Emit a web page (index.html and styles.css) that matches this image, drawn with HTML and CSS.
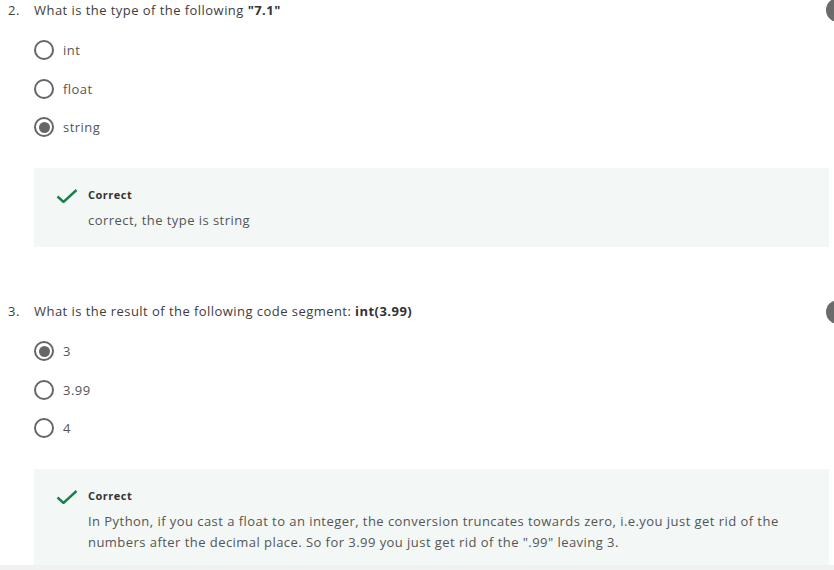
FILE: index.html
```html
<!DOCTYPE html>
<html lang="en">
<head>
<meta charset="utf-8">
<link rel="stylesheet" href="styles.css">
</head>
<body>
<div class="page">
  <section class="question q2">
    <div class="q-head">
      <span class="q-num">2.</span>
      <span class="q-text">What is the type of the following <b>"7.1"</b></span>
    </div>
    <span class="status-dot"></span>
    <ul class="options">
      <li class="option"><span class="radio"></span><span>int</span></li>
      <li class="option"><span class="radio"></span><span>float</span></li>
      <li class="option"><span class="radio checked"></span><span>string</span></li>
    </ul>
    <div class="feedback fb1">
      <svg class="check" width="22" height="14" viewBox="0 0 22 14"><path d="M1.5 7.5 L7.5 13 L20.5 1" fill="none" stroke="#1a7f4f" stroke-width="2.4"/></svg>
      <div class="fb-body">
        <div class="fb-title">Correct</div>
        <div class="fb-text">correct, the type is string</div>
      </div>
    </div>
  </section>
  <section class="question q3">
    <div class="q-head">
      <span class="q-num">3.</span>
      <span class="q-text">What is the result of the following code segment: <b>int(3.99)</b></span>
    </div>
    <span class="status-dot"></span>
    <ul class="options">
      <li class="option"><span class="radio checked"></span><span>3</span></li>
      <li class="option"><span class="radio"></span><span>3.99</span></li>
      <li class="option"><span class="radio"></span><span>4</span></li>
    </ul>
    <div class="feedback fb2">
      <svg class="check" width="22" height="14" viewBox="0 0 22 14"><path d="M1.5 7.5 L7.5 13 L20.5 1" fill="none" stroke="#1a7f4f" stroke-width="2.4"/></svg>
      <div class="fb-body">
        <div class="fb-title">Correct</div>
        <div class="fb-text">In Python, if you cast a float to an integer, the conversion truncates towards zero, i.e.you just get rid of the numbers after the decimal place. So for 3.99 you just get rid of the ".99" leaving 3.</div>
      </div>
    </div>
  </section>
  <div class="bottom-strip"></div>
</div>
</body>
</html>
```

FILE: styles.css
```css
html, body {
  margin: 0;
  padding: 0;
  background: #ffffff;
  overflow: hidden;
}
body {
  font-family: "Open Sans", "Noto Sans", sans-serif;
  font-size: 13px;
  letter-spacing: 0.45px;
  color: #494949;
  width: 834px;
  height: 570px;
}
.page {
  display: flex;
  flex-direction: column;
}
.question {
  position: relative;
}
.q-head {
  display: flex;
  line-height: 20px;
  padding-left: 8px;
  color: #3d3d3d;
}
.q3 { margin-top: 54px; }
.q-num {
  width: 26px;
}
.q-text b { font-weight: 700; color: #333; }
.status-dot {
  position: absolute;
  left: 826px;
  top: -2px;
  width: 24px;
  height: 24px;
  border-radius: 50%;
  background: #6b6b6b;
}
.q3 .status-dot { top: -1px; }
.options {
  list-style: none;
  margin: 20px 0 0;
  padding: 0 0 0 34px;
  display: flex;
  flex-direction: column;
  gap: 18.5px;
}
.option {
  display: flex;
  align-items: center;
  gap: 9px;
  height: 20px;
  color: #555;
}
.radio {
  box-sizing: border-box;
  width: 20px;
  height: 20px;
  border: 2px solid #666;
  border-radius: 50%;
  display: flex;
  align-items: center;
  justify-content: center;
  flex: none;
}
.radio.checked::after {
  content: "";
  width: 11px;
  height: 11px;
  border-radius: 50%;
  background: #666;
}
.feedback {
  margin: 31px 5px 0 34px;
  background: #f3f8f6;
  display: flex;
  align-items: flex-start;
  padding: 19px 20px 0 22px;
  gap: 10px;
  box-sizing: border-box;
}
.fb1 { height: 79px; }
.fb2 { height: 96px; }
.check { margin-top: 2px; flex: none; }
.fb-title {
  font-size: 11px;
  font-weight: 700;
  letter-spacing: 0.5px;
  color: #333;
  line-height: 16px;
}
.fb-text {
  margin-top: 7px;
  line-height: 21px;
  color: #555;
}
.bottom-strip {
  height: 6px;
  background: #f1f1f1;
}
```
